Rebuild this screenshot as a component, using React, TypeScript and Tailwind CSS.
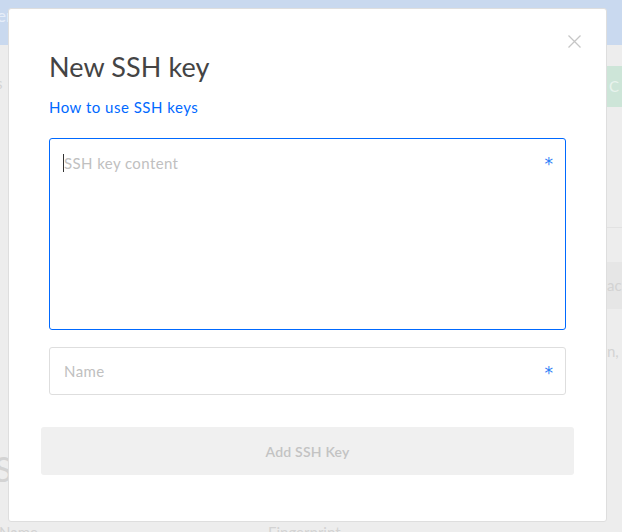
import React from "react";

const Asterisk = () => (
  <span className="absolute right-[12px] top-[17px] font-['DejaVu_Sans',sans-serif] text-[17px] leading-none text-[#2f7ff7]">
    *
  </span>
);

const CloseIcon = () => (
  <svg width="13" height="13" viewBox="0 0 13 13" fill="none" stroke="#c6c6c6" strokeWidth="1.3">
    <path d="M0.5 0.5L12.5 12.5M12.5 0.5L0.5 12.5" />
  </svg>
);

const BackgroundPage = () => (
  <div className="flex h-full flex-col bg-[#ededed] text-[#d3d3d3]">
    <div className="flex h-[45px] shrink-0 items-start bg-[#c9d9ef] pt-[8px] text-[17px] leading-[16px] text-[#e6eef9]">
      <span className="-ml-[3px]">er</span>
    </div>
    <div className="flex min-h-0 flex-1">
      <div className="flex flex-1 flex-col pt-[28px]">
        <span className="-ml-[4px] shrink-0 text-[15px] leading-[20px]">s</span>
        <span className="mt-[356px] -ml-[6px] shrink-0 text-[34px] leading-[40px]">S</span>
        <div className="mt-[35px] flex shrink-0 text-[15px] leading-[16px]">
          <span className="-ml-[1px] w-[269px]">Name</span>
          <span>Fingerprint</span>
        </div>
      </div>
      <div className="flex w-[15px] flex-col">
        <div className="mt-[21px] flex h-[41px] shrink-0 items-center bg-[#cde5d8] pl-[2px] text-[15px] text-[#e8f3ed]">C</div>
        <div className="mt-[120px] h-px shrink-0 bg-[#e2e2e2]" />
        <div className="mt-[34px] flex h-[47px] shrink-0 items-center bg-[#e6e6e6] text-[15px]">ac</div>
        <div className="mt-[32px] shrink-0 whitespace-nowrap text-[15px] leading-[20px]">n, y</div>
      </div>
    </div>
  </div>
);

export default function App() {
  return (
    <div className="relative h-[532px] w-[622px] overflow-hidden font-['Lato',sans-serif]">
      <BackgroundPage />
      <div className="absolute left-[8px] top-[8px] flex h-[514px] w-[599px] flex-col rounded-[3px] border border-[#dedede] bg-white px-[32px]">
        <div className="flex justify-end pt-[26px]">
          <button type="button" className="mr-[-7px]">
            <CloseIcon />
          </button>
        </div>
        <div className="px-[8px]">
          <h2 className="mt-[2px] text-[27px] leading-[34px] tracking-[0.1px] text-[#444]">New SSH key</h2>
          <a className="mt-[13px] block text-[15px] leading-[20px] tracking-[0.5px] text-[#0069ff]">
            How to use SSH keys
          </a>
          <div className="relative mt-[21px] h-[192px] rounded-[3px] border border-[#0069ff]">
            <div className="flex items-center pl-[13px] pt-[14px] text-[15px] leading-[20px] tracking-[0.4px] text-[#c0c0c0]">
              <span className="h-[18px] w-px bg-[#333]" />
              <span>SSH key content</span>
            </div>
            <Asterisk />
          </div>
          <div className="relative mt-[17px] h-[48px] rounded-[3px] border border-[#dedede]">
            <div className="pl-[14px] pt-[13px] text-[15px] leading-[20px] tracking-[0.4px] text-[#c0c0c0]">Name</div>
            <Asterisk />
          </div>
        </div>
        <button
          type="button"
          className="mt-[32px] h-[48px] rounded-[3px] bg-[#f0f0f0] text-[14px] font-semibold tracking-[0.2px] text-[#c3c3c3]"
        >
          Add SSH Key
        </button>
      </div>
    </div>
  );
}
